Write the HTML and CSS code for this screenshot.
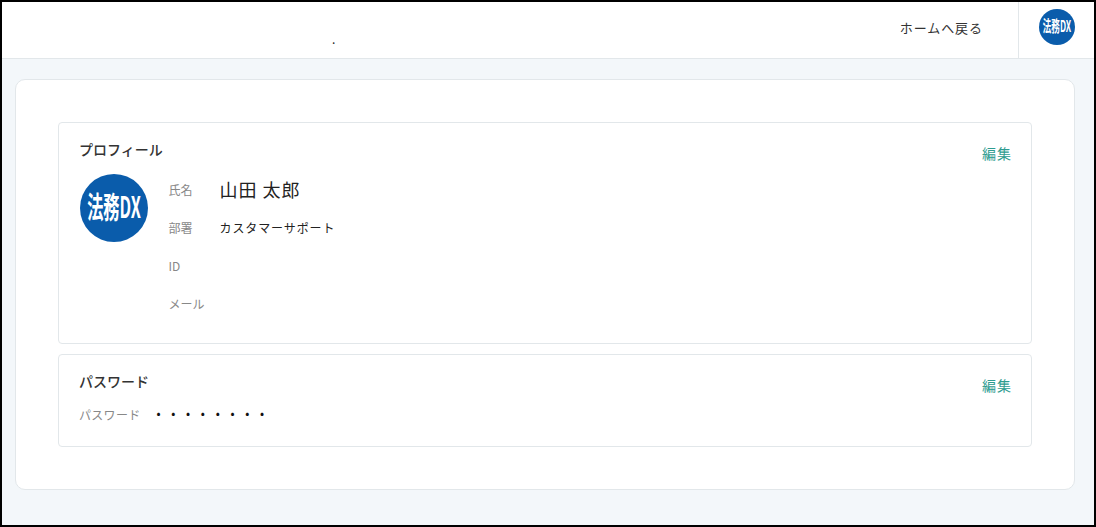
FILE: index.html
```html
<!DOCTYPE html>
<html lang="ja">
<head>
<meta charset="utf-8">
<title>プロフィール</title>
<link rel="stylesheet" href="styles.css">
</head>
<body>
<div class="frame">
  <header class="topbar">
    <div class="brand"><span class="brand-dot">.</span></div>
    <a class="back-link">ホームへ戻る</a>
    <div class="user-cell">
      <svg class="logo logo-small" viewBox="0 0 68 68"><circle cx="34" cy="34" r="34" fill="#0a5cab"/><text transform="translate(34 44) scale(0.54 1)" text-anchor="middle" class="logo-text">法務DX</text></svg>
    </div>
  </header>
  <main class="page">
    <div class="panel">
      <section class="card card-profile">
        <div class="card-head">
          <h2 class="card-title">プロフィール</h2>
          <a class="edit">編集</a>
        </div>
        <div class="profile-body">
          <svg class="logo logo-large" viewBox="0 0 68 68"><circle cx="34" cy="34" r="34" fill="#0a5cab"/><text transform="translate(34 44) scale(0.54 1)" text-anchor="middle" class="logo-text">法務DX</text></svg>
          <dl class="fields">
            <div class="field"><dt class="label">氏名</dt><dd class="value value-name">山田 太郎</dd></div>
            <div class="field"><dt class="label">部署</dt><dd class="value">カスタマーサポート</dd></div>
            <div class="field"><dt class="label">ID</dt><dd class="value"></dd></div>
            <div class="field"><dt class="label">メール</dt><dd class="value"></dd></div>
          </dl>
        </div>
      </section>
      <section class="card card-password">
        <div class="card-head">
          <h2 class="card-title">パスワード</h2>
          <a class="edit">編集</a>
        </div>
        <div class="password-row">
          <span class="label label-wide">パスワード</span>
          <span class="dots">••••••••</span>
        </div>
      </section>
    </div>
  </main>
</div>
</body>
</html>
```
FILE: styles.css
```css
* { box-sizing: border-box; }
html, body { margin: 0; padding: 0; }
body {
  font-family: "Noto Sans CJK JP", "Noto Sans", sans-serif;
  color: #222;
}
.frame {
  width: 1096px;
  height: 527px;
  border: 2px solid #000;
  background: #f3f7fa;
  display: flex;
  flex-direction: column;
  overflow: hidden;
}
.topbar {
  height: 57px;
  flex: none;
  background: #fff;
  border-bottom: 1px solid #e2e7ea;
  display: flex;
  align-items: stretch;
}
.brand { flex: 1; padding: 28px 0 0 330px; font-size: 12px; line-height: 17px; }
.brand-dot { display: block; }
.back-link {
  align-self: center;
  font-size: 13px;
  letter-spacing: 0.95px;
  color: #333;
  margin-right: 35px;
  margin-bottom: 4px;
  line-height: 20px;
}
.user-cell {
  width: 76px;
  border-left: 1px solid #e2e7ea;
  display: flex;
  align-items: center;
  padding-left: 20px;
  padding-bottom: 6px;
}
.logo { display: block; flex: none; }
.logo-small { width: 36px; height: 36px; }
.logo-large { width: 68px; height: 68px; margin-top: 3px; }
.logo-text {
  font-family: "Noto Sans CJK JP", sans-serif;
  font-size: 30px;
  font-weight: 700;
  fill: #fff;
}
.page { flex: 1; padding: 20px 19px 35px 13px; }
.panel {
  height: 411px;
  background: #fff;
  border: 1px solid #e2e7ea;
  border-radius: 10px;
  padding: 42px 42px 0;
  display: flex;
  flex-direction: column;
  gap: 10px;
}
.card {
  border: 1px solid #e2e7ea;
  border-radius: 4px;
  padding: 0 19px 0 21px;
}
.card-profile { height: 222px; }
.card-password { height: 93px; }
.card-head {
  display: flex;
  justify-content: space-between;
  align-items: flex-start;
  padding-top: 16px;
}
.card-title {
  margin: 0 0 0 -1px;
  font-size: 14px;
  font-weight: 500;
  line-height: 20px;
  color: #333;
}
.edit {
  font-size: 14px;
  letter-spacing: 1px;
  line-height: 20px;
  color: #2e9c90;
  margin-top: 4px;
}
.profile-body {
  display: flex;
  gap: 20.5px;
  margin-top: 8px;
}
.fields { margin: 0; display: flex; flex-direction: column; }
.field {
  height: 38px;
  display: flex;
  align-items: center;
}
.label {
  font-size: 12px;
  color: #888;
  line-height: 16px;
}
.field .label { width: 51px; }
.label-wide { letter-spacing: 0.3px; margin-left: -1px; }
.value {
  margin: 0;
  font-size: 12px;
  line-height: 20px;
  letter-spacing: 0.9px;
  color: #222;
}
.value-name { font-size: 18px; letter-spacing: 1px; margin-bottom: 2px; }
.password-row {
  display: flex;
  align-items: center;
  gap: 16px;
  margin-top: 10px;
}
.dots {
  font-size: 12px;
  letter-spacing: 10.7px;
  line-height: 16px;
  color: #111;
  margin-bottom: 3px;
}
```
